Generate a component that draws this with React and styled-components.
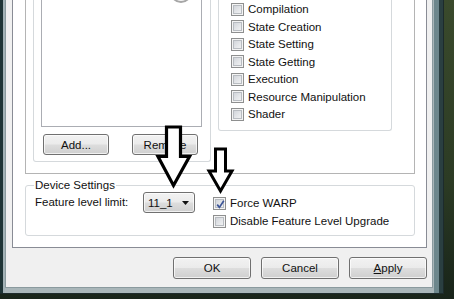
import React from 'react'
import styled, { createGlobalStyle } from 'styled-components'

const Global = createGlobalStyle`
	html, body {
		margin: 0;
		padding: 0;
		background: #1c2a20;
	}
	* {
		box-sizing: border-box;
	}
`

const Desktop = styled.div`
	position: relative;
	width: 454px;
	height: 299px;
	overflow: hidden;
	display: flex;
	flex-direction: column;
	justify-content: flex-end;
	padding-bottom: 5px;
	background: linear-gradient(180deg, #3a4a2c 0%, #2c3b24 60%, #18241a 100%);
	font-family: 'Liberation Sans', Arial, sans-serif;
	font-size: 11.5px;
	color: #111;
`

const Frame = styled.div`
	width: 444px;
	padding: 0 10px 5px 5px;
	border-right: 1px solid #1d2b2c;
	border-bottom: 1px solid #1d2b2c;
	background: linear-gradient(
		90deg,
		#1f3436 0 3px,
		#a3b2b6 3px 5px,
		#a9b6b9 5px calc(100% - 9px),
		#6d878c calc(100% - 9px) calc(100% - 4px),
		#2a3f41 calc(100% - 4px)
	);
`

const Body = styled.div`
	display: flex;
	flex-direction: column;
	gap: 9px;
	padding: 0 5px 8px 6px;
	background: #f0f0f0;
	border: 1px solid #8a9a9e;
	border-top: none;
`

const TabPage = styled.div`
	display: flex;
	flex-direction: column;
	padding: 0 11px 11px 12px;
	background: #fff;
	border: 1px solid #898c95;
	border-top: none;
`

const OuterGroup = styled.div`
	display: flex;
	align-items: flex-start;
	gap: 7px;
	height: 220px;
	padding: 0 0 10px 7px;
	border: 1px solid #b4b4b4;
	border-top: none;
`

const ListGroup = styled.div`
	display: flex;
	flex-direction: column;
	gap: 7px;
	width: 178px;
	height: 208px;
	padding: 0 8px 6px 7px;
	border: 1px solid #d5d9dc;
	border-top: none;
	border-radius: 0 0 3px 3px;
`

const ListBox = styled.div`
	position: relative;
	flex: 1;
	background: #fff;
	border: 1px solid #abadb3;
	border-top: none;
`

const BusyRing = styled.div`
	position: absolute;
	right: 9px;
	bottom: 123px;
	width: 22px;
	height: 22px;
	border-radius: 50%;
	border: 2px solid #a6a6a6;
	background: #f4f4f4;
`

const ListButtons = styled.div`
	display: flex;
	justify-content: space-between;
	padding: 0 4px 0 2px;
`

const Button = styled.button`
	width: ${p => p.$w || 78}px;
	height: ${p => p.$h || 22}px;
	padding: 0;
	font: inherit;
	color: #111;
	border: 1px solid #707070;
	border-radius: 3px;
	background: linear-gradient(180deg, #f2f2f2 0%, #ebebeb 48%, #dddddd 52%, #cfcfcf 100%);
	box-shadow: inset 0 0 0 1px rgba(255, 255, 255, 0.7);
	u {
		text-decoration: underline;
	}
`

const CategoryPanel = styled.div`
	display: flex;
	flex-direction: column;
	justify-content: flex-end;
	width: 174px;
	height: 177px;
	padding: 0 0 7px 12px;
	background: #fff;
	border: 1px solid #d5d9dc;
	border-top: none;
	border-radius: 0 0 3px 3px;
`

const CheckRow = styled.label`
	display: flex;
	align-items: center;
	gap: 4px;
	height: ${p => p.$h || 17.5}px;
	white-space: nowrap;
`

const Box = styled.span`
	position: relative;
	flex: none;
	width: 13px;
	height: 13px;
	border: 1px solid #8e8f8f;
	background: linear-gradient(135deg, #c9cdd3 0%, #e4e6e9 55%, #f7f7f7 100%);
	box-shadow: inset 0 0 0 1px #f4f4f4, inset 0 0 0 2px #b8bcc1;
	svg {
		position: absolute;
		left: 1px;
		top: 1px;
	}
`

const DeviceSet = styled.fieldset`
	margin: 4px 0 0 0;
	padding: 0 8px 5px 8px;
	min-width: 0;
	border: 1px solid #d5d9dc;
	border-radius: 3px;
`

const Legend = styled.legend`
	padding: 0 1px;
	line-height: 14px;
`

const DeviceRow = styled.div`
	display: flex;
	align-items: flex-start;
`

const LimitLabel = styled.span`
	flex: none;
	width: 109px;
	height: 21px;
	line-height: 21px;
	padding-left: 1px;
`

const Combo = styled.div`
	display: flex;
	align-items: center;
	justify-content: space-between;
	width: 52px;
	height: 21px;
	padding: 0 5px 0 4px;
	border: 1px solid #707070;
	border-radius: 3px;
	background: linear-gradient(180deg, #f2f2f2 0%, #ebebeb 48%, #dddddd 52%, #cfcfcf 100%);
	box-shadow: inset 0 0 0 1px rgba(255, 255, 255, 0.7);
`

const DeviceChecks = styled.div`
	display: flex;
	flex-direction: column;
	margin: 2px 0 0 18px;
`

const Footer = styled.div`
	display: flex;
	justify-content: flex-end;
	gap: 10px;
`

const Arrows = styled.svg`
	position: absolute;
	left: 0;
	top: 0;
	pointer-events: none;
`

const categories = [
	'Compilation',
	'State Creation',
	'State Setting',
	'State Getting',
	'Execution',
	'Resource Manipulation',
	'Shader',
]

const CheckBox = ({ checked }) => (
	<Box>
		{checked && (
			<svg width="11" height="11" viewBox="0 0 11 11">
				<path d="M2.2 5.6 L4.4 8.4 L8.8 1.8" fill="none" stroke="#3d5597" strokeWidth="1.7" />
			</svg>
		)}
	</Box>
)

export default function App() {
	return (
		<Desktop>
			<Global />
			<Frame>
				<Body>
					<TabPage>
						<OuterGroup>
							<ListGroup>
								<ListBox>
									<BusyRing />
								</ListBox>
								<ListButtons>
									<Button $w={66} $h={21}>Add...</Button>
									<Button $w={66} $h={21}>Remove</Button>
								</ListButtons>
							</ListGroup>
							<CategoryPanel>
								{categories.map(c => (
									<CheckRow key={c}>
										<CheckBox />
										{c}
									</CheckRow>
								))}
							</CategoryPanel>
						</OuterGroup>
						<DeviceSet>
							<Legend>Device Settings</Legend>
							<DeviceRow>
								<LimitLabel>Feature level limit:</LimitLabel>
								<Combo>
									<span>11_1</span>
									<svg width="7" height="4" viewBox="0 0 7 4">
										<path d="M0 0 H7 L3.5 4 Z" fill="#111" />
									</svg>
								</Combo>
								<DeviceChecks>
									<CheckRow $h={18}>
										<CheckBox checked />
										Force WARP
									</CheckRow>
									<CheckRow $h={18}>
										<CheckBox />
										Disable Feature Level Upgrade
									</CheckRow>
								</DeviceChecks>
							</DeviceRow>
						</DeviceSet>
					</TabPage>
					<Footer>
						<Button>OK</Button>
						<Button>Cancel</Button>
						<Button>
							<u>A</u>pply
						</Button>
					</Footer>
				</Body>
			</Frame>
			<Arrows width="454" height="299" viewBox="0 0 454 299">
				<path
					d="M166.5 127 H180.5 V156.5 H189.5 L173.5 185.5 L158 156.5 H166.5 Z"
					fill="#fff"
					stroke="#000"
					strokeWidth="3.2"
					strokeLinejoin="miter"
				/>
				<path
					d="M215.5 149 H225.5 V171 H232 L220.5 191 L209 171 H215.5 Z"
					fill="#fff"
					stroke="#000"
					strokeWidth="3"
					strokeLinejoin="miter"
				/>
			</Arrows>
		</Desktop>
	)
}
